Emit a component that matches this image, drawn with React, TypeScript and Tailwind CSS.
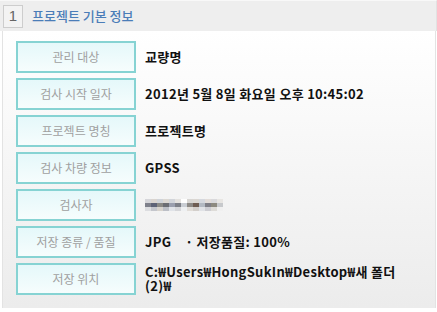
import React from 'react';

const rows: { label: string; value: React.ReactNode }[] = [
  { label: '관리 대상', value: '교량명' },
  { label: '검사 시작 일자', value: '2012년 5월 8일 화요일 오후 10:45:02' },
  { label: '프로젝트 명칭', value: '프로젝트명' },
  { label: '검사 차량 정보', value: 'GPSS' },
  { label: '검사자', value: null },
  {
    label: '저장 종류 / 품질',
    value: (
      <>
        JPG<span className="ml-[14px]">· 저장품질: 100%</span>
      </>
    ),
  },
  { label: '저장 위치', value: 'C:₩Users₩HongSukIn₩Desktop₩새 폴더 (2)₩' },
];

// pixelated name, drawn as a mosaic of tiles
const mosaic = [
  ['#d6d6da', '#d9d4cf', '#cfd3d9', '#dcd8d2', '#d2d5da', '#e4e2df', '#ffffff', '#d8d6d3', '#dbd7d2', '#d5d8de', '#e2dcd8', '#d9d9dc', '#e8e6e3'],
  ['#7f818b', '#5d6276', '#8a8985', '#6b6d73', '#9a9fae', '#7d8088', '#c9cdd3', '#8d8a86', '#6f5d52', '#b3b9c2', '#7f7f87', '#8d8a80', '#c7c9cc'],
  ['#dcdde0', '#c4c6cc', '#d7d3cd', '#bcbfc6', '#e0e3e8', '#d5d6d9', '#eef0f2', '#e1ddd8', '#d3cfcb', '#e0e2e6', '#cdcdd2', '#dedcd8', '#f0f0f0'],
];

function Mosaic() {
  return (
    <div className="flex flex-col">
      {mosaic.map((r, i) => (
        <div key={i} className="flex">
          {r.map((c, j) => (
            <span key={j} className="block h-[4px] w-[6px]" style={{ backgroundColor: c }} />
          ))}
        </div>
      ))}
    </div>
  );
}

export default function App() {
  return (
    <div className="h-[312px] w-[437px] bg-white font-['Noto_Sans_CJK_KR','Noto_Sans',sans-serif]">
      <div className="flex h-[31px] items-center border-t border-r border-t-[#f8f8f8] border-r-[#e2e2e2] bg-[#eeeeee] pl-[3px]">
        <div className="flex h-[23px] w-[20px] items-center justify-center border border-[#cdcdcd] bg-[#f3f3f3] font-['Liberation_Sans',sans-serif] text-[15px] text-[#666666]">
          1
        </div>
        <div className="ml-[9px] text-[13px] font-medium text-[#4b7db8]">프로젝트 기본 정보</div>
      </div>
      <div className="ml-[2px] mr-[1px] flex h-[277px] flex-col gap-[5px] border-x border-[#e3e3e3] bg-gradient-to-b from-white to-[#ececec] pl-[13px] pt-[10px]">
        {rows.map((row) => (
          <div key={row.label} className="flex items-center">
            <div className="flex h-[32px] w-[120px] shrink-0 items-center justify-center border-2 border-[#86d3d3] bg-gradient-to-b from-[#e5f8fa] to-[#f6fdfd] text-[12px] text-[#a0a0a0]">
              {row.label}
            </div>
            <div className="ml-[9px] w-[268px] text-[13px] font-bold leading-[14px] tracking-[0.3px] text-[#111111]">
              {row.value ?? <Mosaic />}
            </div>
          </div>
        ))}
      </div>
    </div>
  );
}
